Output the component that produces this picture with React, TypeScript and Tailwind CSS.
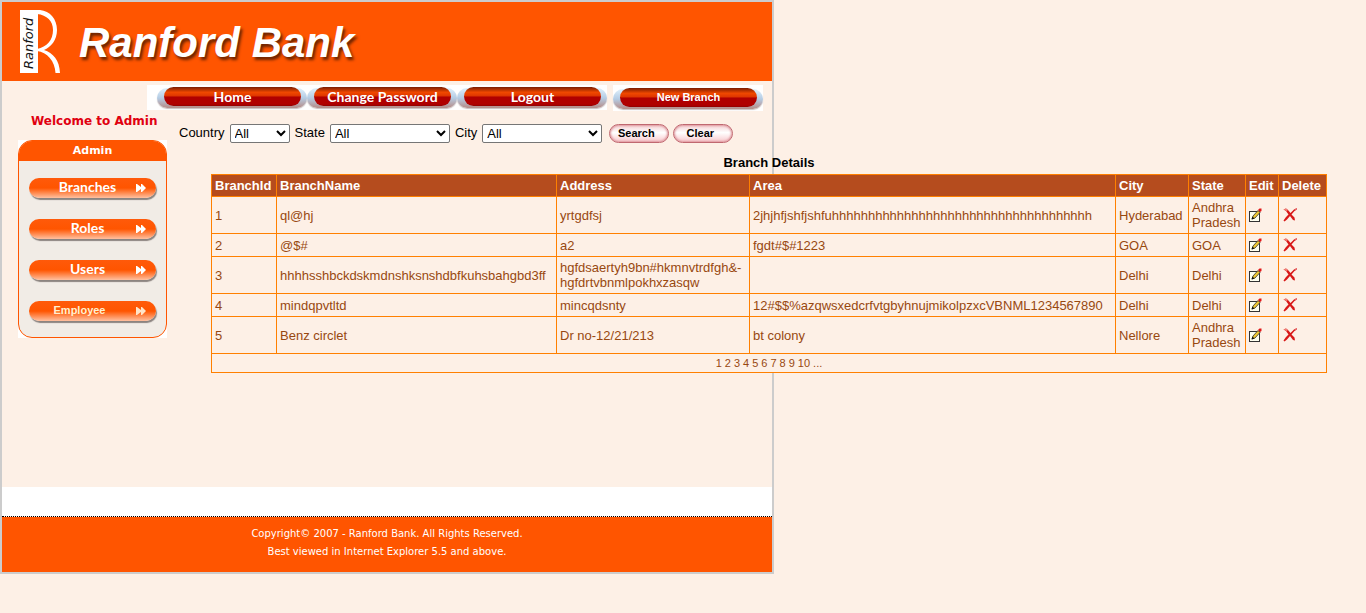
import React from "react";

const font = "font-['Liberation_Sans',Arial,sans-serif]";

const rows = [
  { id: 1, name: "ql@hj", address: ["yrtgdfsj"], area: "2jhjhfjshfjshfuhhhhhhhhhhhhhhhhhhhhhhhhhhhhhhhhhhhh", city: "Hyderabad", state: "Andhra Pradesh" },
  { id: 2, name: "@$#", address: ["a2"], area: "fgdt#$#1223", city: "GOA", state: "GOA" },
  { id: 3, name: "hhhhsshbckdskmdnshksnshdbfkuhsbahgbd3ff", address: ["hgfdsaertyh9bn#hkmnvtrdfgh&-", "hgfdrtvbnmlpokhxzasqw"], area: "", city: "Delhi", state: "Delhi" },
  { id: 4, name: "mindqpvtltd", address: ["mincqdsnty"], area: "12#$$%azqwsxedcrfvtgbyhnujmikolpzxcVBNML1234567890", city: "Delhi", state: "Delhi" },
  { id: 5, name: "Benz circlet", address: ["Dr no-12/21/213"], area: "bt colony", city: "Nellore", state: "Andhra Pradesh" },
];

const columns = [
  { label: "BranchId", width: "w-[65px]" },
  { label: "BranchName", width: "w-[280px]" },
  { label: "Address", width: "w-[193px]" },
  { label: "Area", width: "w-[366px]" },
  { label: "City", width: "w-[73px]" },
  { label: "State", width: "w-[57px]" },
  { label: "Edit", width: "w-[33px]" },
  { label: "Delete", width: "w-[48px]" },
];

const pages = ["1", "2", "3", "4", "5", "6", "7", "8", "9", "10", "..."];

function Logo() {
  return (
    <svg width="41" height="64" viewBox="0 0 41 64" role="img" aria-label="Ranford">
      <rect x="0" y="0" width="18" height="63" fill="#fff" />
      <path
        d="M17 0H20C30 1 37 9 37 20C37 30 31 37 24 40C33 43 39.500 50 40 63H35.500C35 51 27 42 17 41V39C27 37 33 30 33 20C33 11 27 5 17 4Z"
        fill="#fff"
      />
      <text
        transform="translate(13 59) rotate(-90)"
        fontSize="13"
        fontStyle="italic"
        fontFamily="DejaVu Sans, Liberation Sans, sans-serif"
        fill="#111"
      >
        Ranford
      </text>
    </svg>
  );
}

function NavPill({ label, small = false }: { label: string; small?: boolean }) {
  return (
    <a href="#" className={`flex w-[150px] items-start bg-white ${small ? "h-[26px] pt-1" : "h-[25px] pt-[3px]"}`}>
      <span className="flex h-5 w-full rounded-full bg-linear-to-b from-[#e0f0fc] via-[#b4cce4] to-[#b48c88] pr-1.5 pl-[7px] shadow-[0_1px_1px_#c8c0c0]">
        <span
          className={`-mt-px flex h-[19px] w-full items-center justify-center rounded-full bg-[linear-gradient(#7a1c00,#f04800_28%,#e03800_45%,#b00000_54%,#b00000_90%,#900000)] font-bold text-white ${small ? "font-['Liberation_Sans',sans-serif] text-[11px]" : "font-['Lato',sans-serif] text-[14px]"}`}
        >
          {label}
        </span>
      </span>
    </a>
  );
}

function MenuPill({ label, old = false }: { label: string; old?: boolean }) {
  return (
    <a
      href="#"
      className="relative flex h-5 items-start justify-center rounded-full bg-[linear-gradient(#ff5a0a,#ff5500_50%,#ffc0a0)] pr-2.5 font-['Lato',sans-serif] text-[14px] leading-[18px] font-bold text-white shadow-[1px_2px_1px_#8c8480]"
    >
      <span className={old ? "pr-4 font-['Liberation_Sans',sans-serif] text-[11px] text-[#fff0d0]" : ""}>{label}</span>
      <svg className="absolute top-1.5 right-2.5" width="10" height="8" viewBox="0 0 10 8" fill={old ? "#ffe4c8" : "#fff"} aria-hidden="true">
        <path d="M0 0H1L5 3V0H6L10 4L6 8H5V5L1 8H0Z" />
      </svg>
    </a>
  );
}

function Filter({ label, id, width }: { label: string; id: string; width: string }) {
  return (
    <>
      <label htmlFor={id}>{label}</label>
      <select id={id} className={`h-[19px] rounded-[2px] border border-[#767676] bg-white text-[13px] text-black ${width}`}>
        <option>All</option>
      </select>
    </>
  );
}

function PinkButton({ label }: { label: string }) {
  return (
    <button className="h-[19px] w-[60px] rounded-full border border-[#c06870] bg-[linear-gradient(#f4d0d2,#fff_45%,#f8c8cc)] pr-1.5 text-[11px] leading-3 font-bold text-black shadow-[inset_0_0_2px_1px_#e09aa0]">
      {label}
    </button>
  );
}

function EditIcon() {
  return (
    <svg width="13" height="14" viewBox="0 0 13 14" aria-hidden="true">
      <rect x="0.500" y="3.500" width="10" height="10" fill="#fffff0" stroke="#333" />
      <path d="M3 11L4 8L9 2.500L11 4.500L6 10Z" fill="#f0c830" stroke="#333" strokeWidth="0.800" />
      <path d="M9 2L10.500 0.500L12.500 0.500V3L11 4Z" fill="#e01818" />
      <path d="M2.500 11.500L3.500 8.500L5.500 10.500Z" fill="#111" />
    </svg>
  );
}

function DeleteIcon() {
  return (
    <svg width="15" height="14" viewBox="0 0 15 14" aria-hidden="true">
      <path
        d="M0.500 1.500L3 0.500L5 2L7.500 5L11 1.500L14 0V1.500L11.500 3L8.500 6.500L11.500 9.500L12 12.500L10 12L7 8L4 11.500L1.500 13.500L0.500 12.500L3 9L5.500 6.500L3 3Z"
        fill="#d81818"
      />
      <path d="M0.500 1.500L3 0.500L5 2L3.500 3Z" fill="#f08078" />
      <path d="M12 1L14 0V1.500L12.500 2.500Z" fill="#e87878" />
    </svg>
  );
}

export default function App() {
  return (
    <div className={`min-h-screen bg-[#fdf0e6] ${font}`}>
      <div className="w-full max-w-[774px] border-2 border-[#ccc]">
        <header className="flex h-[79px] items-start bg-[#ff5500] pt-2 pl-[18px]">
          <Logo />
          <h1 className="pt-2 pl-[18px] text-[42px] leading-[50px] font-bold text-white italic [text-shadow:2px_3px_3px_#6b2400]">
            Ranford Bank
          </h1>
        </header>

        <main className="flex min-h-[406px]">
          <aside className="w-[165px] shrink-0 pt-8 pl-4">
            <p className="pl-[13px] font-['DejaVu_Sans',sans-serif] text-[12px] leading-4 font-bold whitespace-nowrap text-[#e00010]">
              Welcome to Admin
            </p>
            <nav aria-label="Admin" className="mt-[11px] bg-white">
              <div className="overflow-hidden rounded-[14px] border border-[#ff5500] bg-[#f1ece6]">
                <h2 className="h-5 bg-[#ff5500] text-center font-['DejaVu_Sans',sans-serif] text-[11px] leading-5 font-bold text-white">
                  Admin
                </h2>
                <div className="flex flex-col gap-[21px] px-2.5 pt-[17px] pb-4">
                  <MenuPill label="Branches" />
                  <MenuPill label="Roles" />
                  <MenuPill label="Users" />
                  <MenuPill label="Employee" old />
                </div>
              </div>
            </nav>
          </aside>

          <section className="min-w-0 flex-1">
            <nav aria-label="Main" className="-ml-5 flex h-[26px] items-start gap-1.5 mt-1">
              <div className="flex bg-white pl-2.5">
                <NavPill label="Home" />
                <NavPill label="Change Password" />
                <NavPill label="Logout" />
              </div>
              <NavPill label="New Branch" small />
            </nav>

            <form className="mt-3 flex h-5 items-center gap-[5px] pl-3 text-[13px] whitespace-nowrap">
              <Filter label="Country" id="country" width="w-[60px]" />
              <Filter label="State" id="state" width="w-[120px]" />
              <Filter label="City" id="city" width="w-[120px]" />
              <div className="flex gap-1 pl-[2px]">
                <PinkButton label="Search" />
                <PinkButton label="Clear" />
              </div>
            </form>

            <table className="mt-3 ml-11 w-[1115px] table-fixed border-collapse bg-[#fdf0e6] text-left text-[13px] leading-[15px] text-[#984810]">
              <caption className="pb-[3px] leading-4 font-bold text-black">Branch Details</caption>
              <colgroup>
                {columns.map((c) => (
                  <col key={c.label} className={c.width} />
                ))}
              </colgroup>
              <thead className="bg-[#b54c1e] text-white">
                <tr>
                  {columns.map((c) => (
                    <th key={c.label} className="border border-[#ff8000] p-[3px]">
                      {c.label}
                    </th>
                  ))}
                </tr>
              </thead>
              <tbody>
                {rows.map((r) => (
                  <tr key={r.id} className="h-[23px]">
                    <td className="border border-[#ff8000] p-[3px]">{r.id}</td>
                    <td className="border border-[#ff8000] p-[3px]">{r.name}</td>
                    <td className="border border-[#ff8000] p-[3px]">
                      {r.address.map((line) => (
                        <div key={line} className="whitespace-nowrap">
                          {line}
                        </div>
                      ))}
                    </td>
                    <td className="border border-[#ff8000] p-[3px] whitespace-nowrap">{r.area}</td>
                    <td className="border border-[#ff8000] p-[3px]">{r.city}</td>
                    <td className="border border-[#ff8000] p-[3px]">{r.state}</td>
                    <td className="border border-[#ff8000] px-[3px]">
                      <button aria-label={`Edit branch ${r.id}`} className="block">
                        <EditIcon />
                      </button>
                    </td>
                    <td className="border border-[#ff8000] px-1">
                      <button aria-label={`Delete branch ${r.id}`} className="block">
                        <DeleteIcon />
                      </button>
                    </td>
                  </tr>
                ))}
                <tr>
                  <td colSpan={8} className="border border-[#ff8000] p-[3px] text-[11px] leading-3">
                    <div className="flex justify-center gap-[3px]">
                      {pages.map((p) => (
                        <a key={p} href="#">
                          {p}
                        </a>
                      ))}
                    </div>
                  </td>
                </tr>
              </tbody>
            </table>
          </section>
        </main>

        <div className="h-[29px] bg-white" />
        <footer className="border-t border-dotted border-black bg-[#ff5500] bg-clip-padding pt-2 pb-[11px] text-center font-['DejaVu_Sans',sans-serif] text-[10px] leading-[18px] text-white">
          <p>Copyright© 2007 - Ranford Bank. All Rights Reserved.</p>
          <p>Best viewed in Internet Explorer 5.5 and above.</p>
        </footer>
      </div>
    </div>
  );
}
